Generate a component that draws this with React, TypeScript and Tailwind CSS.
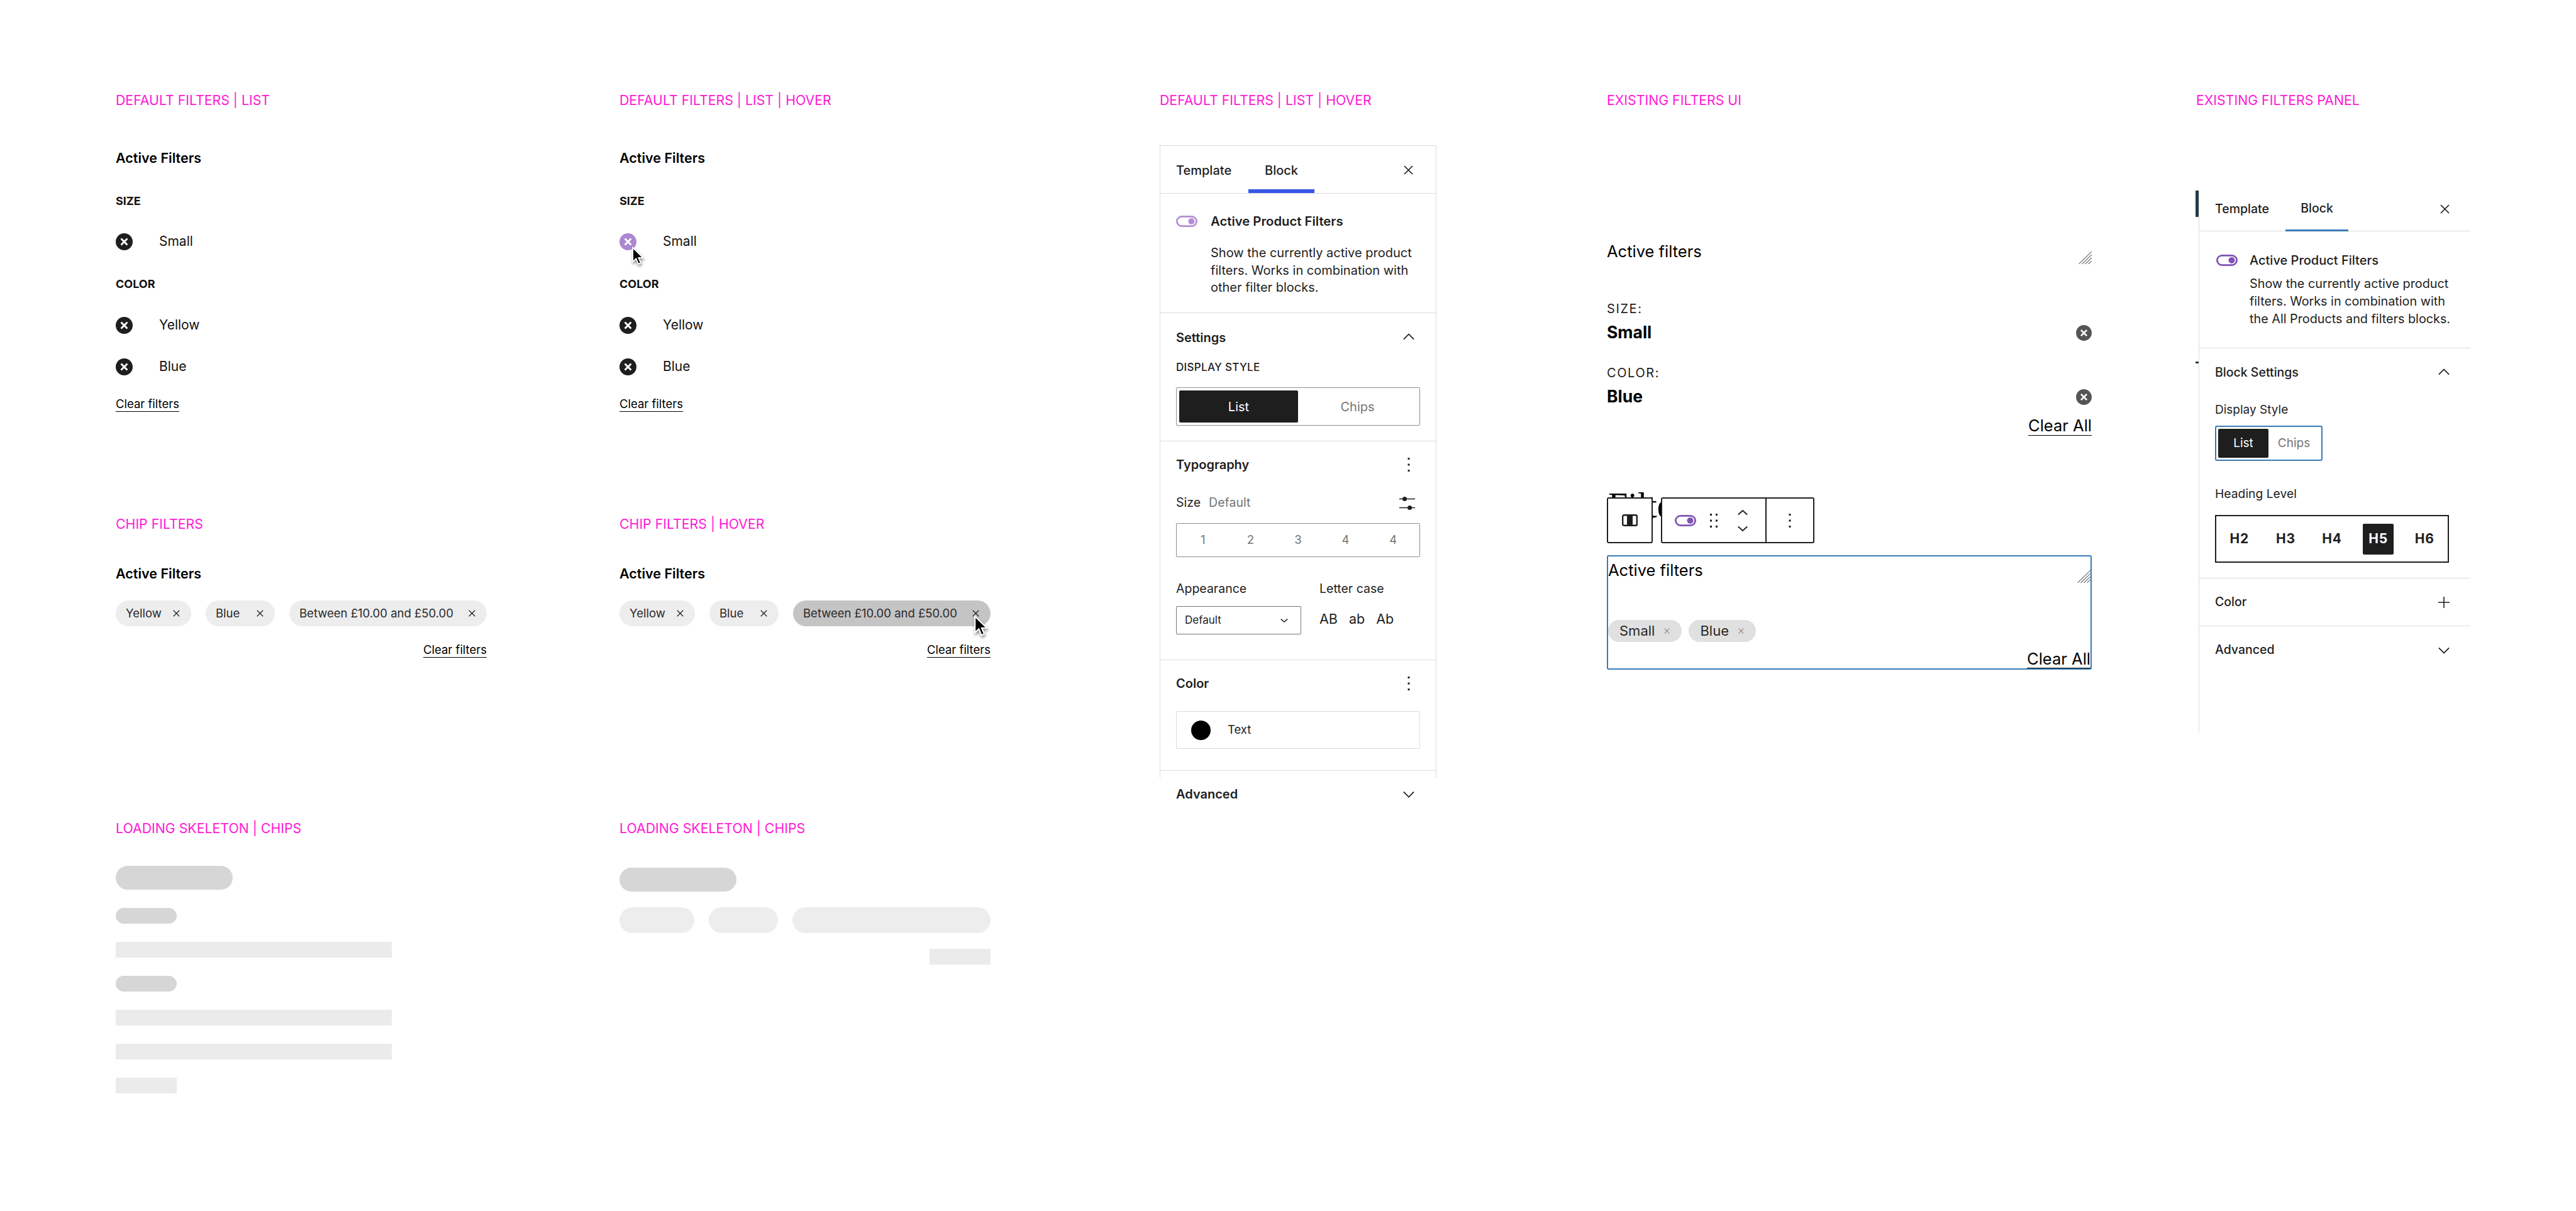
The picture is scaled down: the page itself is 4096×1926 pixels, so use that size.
type Kids = { children?: React.ReactNode };

function Title({ children }: Kids) {
  return <div className="h-[32px] pt-[2px] flex items-center text-[21.3px] text-[#ff19d5] whitespace-nowrap">{children}</div>;
}

function CircleX({ color = "#1e1e1e", size = "w-[27px] h-[27px]" }: { color?: string; size?: string }) {
  return (
    <svg viewBox="0 0 24 24" className={size + " flex-none"}>
      <circle cx="12" cy="12" r="12" fill={color} />
      <path d="M7.6 7.6l8.8 8.8M16.4 7.6l-8.8 8.8" stroke="#fff" strokeWidth="2.6" fill="none" />
    </svg>
  );
}

function Cursor({ className }: { className: string }) {
  return (
    <svg viewBox="-1.5 -1.5 16 24" className={"absolute drop-shadow-[1px_3px_2px_rgba(0,0,0,0.45)] " + className}>
      <path d="M0 0V17.2L4.1 13.4L6.9 20L9.9 18.7L7.1 12.3H12.6Z" fill="#000" stroke="#fff" strokeWidth="1.4" />
    </svg>
  );
}

function CloseIcon({ className = "w-[15px] h-[15px]" }: { className?: string }) {
  return (
    <svg viewBox="0 0 15 15" className={className + " flex-none"}>
      <path d="M1 1l13 13M14 1L1 14" stroke="#1e1e1e" strokeWidth="1.7" fill="none" />
    </svg>
  );
}

function Chevron({ up = false }: { up?: boolean }) {
  return (
    <svg viewBox="0 0 20 12" className="w-[18px] h-[11px] flex-none">
      <path d={up ? "M1 10.5L10 1.5L19 10.5" : "M1 1.5L10 10.5L19 1.5"} stroke="#1e1e1e" strokeWidth="2" fill="none" />
    </svg>
  );
}

function Dots() {
  return (
    <svg viewBox="0 0 4 22" className="w-[4px] h-[22px] flex-none" fill="#1e1e1e">
      <rect x="0.5" y="0" width="3" height="3" />
      <rect x="0.5" y="9.5" width="3" height="3" />
      <rect x="0.5" y="19" width="3" height="3" />
    </svg>
  );
}

function Toggle({ color }: { color: string }) {
  return (
    <svg viewBox="0 0 34 18" className="w-[34px] h-[18px] flex-none">
      <rect x="1.4" y="1.4" width="31.2" height="15.2" rx="7.6" fill="none" stroke={color} strokeWidth="2.8" />
      <circle cx="24.5" cy="9" r="5" fill={color} />
    </svg>
  );
}

function ResizeHandle() {
  return (
    <svg viewBox="0 0 21 20" className="w-[21px] h-[20px] flex-none">
      <path d="M0.5 20L21 0M5.5 20L21 5M10.5 20L21 10M15.5 20L21 15" stroke="#6e6e6e" strokeWidth="1.1" fill="none" />
    </svg>
  );
}

function ListRow({ label, color, children }: { label: string; color?: string; children?: React.ReactNode }) {
  return (
    <div className="relative h-[36px] flex items-center text-[21px] text-[#111]">
      <CircleX color={color} />
      <span className="ml-[42px]">{label}</span>
      {children}
    </div>
  );
}

function ClearFilters({ className = "" }: { className?: string }) {
  return (
    <div className={"w-fit h-[24px] flex items-center border-b border-black text-[18.5px] text-black whitespace-nowrap " + className}>
      Clear filters
    </div>
  );
}

function ListFilters({ title, hover = false }: { title: string; hover?: boolean }) {
  return (
    <section className="flex flex-col">
      <Title>{title}</Title>
      <div className="mt-[60px] h-[32px] flex items-center text-[21.5px] font-semibold text-black">Active Filters</div>
      <div className="mt-[40px] h-[24px] flex items-center text-[18px] font-bold text-[#111]">SIZE</div>
      <div className="mt-[35px]">
        <ListRow label="Small" color={hover ? "#ab87d1" : undefined}>
          {hover && <Cursor className="left-[19px] top-[26px] w-[21px] h-[31px]" />}
        </ListRow>
      </div>
      <div className="mt-[37px] h-[24px] flex items-center text-[18px] font-bold text-[#111]">COLOR</div>
      <div className="mt-[36px]"><ListRow label="Yellow" /></div>
      <div className="mt-[30px]"><ListRow label="Blue" /></div>
      <ClearFilters className="mt-[30px]" />
    </section>
  );
}

function Chip({ label, width, active = false, children }: { label: string; width: string; active?: boolean; children?: React.ReactNode }) {
  return (
    <div className={"relative h-[41px] rounded-full flex items-center justify-between pl-[16px] pr-[18px] text-[18.5px] text-[#2a2a2a] whitespace-nowrap " + width + " " + (active ? "bg-[#c4c4c4]" : "bg-[#ededed]")}>
      {label}
      <CloseIcon className="w-[11px] h-[11px]" />
      {children}
    </div>
  );
}

function ChipFilters({ title, hover = false }: { title: string; hover?: boolean }) {
  return (
    <section className="flex flex-col w-[590px]">
      <Title>{title}</Title>
      <div className="mt-[47px] h-[32px] flex items-center text-[21.5px] font-semibold text-black">Active Filters</div>
      <div className="mt-[27px] flex gap-[23px]">
        <Chip label="Yellow" width="w-[120px]" />
        <Chip label="Blue" width="w-[110px]" />
        <Chip label="Between £10.00 and £50.00" width="w-[314px]" active={hover}>
          {hover && <Cursor className="left-[287px] top-[23px] w-[24px] h-[36px]" />}
        </Chip>
      </div>
      <ClearFilters className="mt-[26px] self-end" />
    </section>
  );
}

function SkeletonList() {
  return (
    <section className="flex flex-col">
      <Title>LOADING SKELETON | CHIPS</Title>
      <div className="mt-[44px] w-[186px] h-[38px] rounded-full bg-[#d6d6d6]" />
      <div className="mt-[29px] flex flex-col gap-[29px]">
        <div className="w-[97px] h-[25px] rounded-full bg-[#d6d6d6]" />
        <div className="w-[439px] h-[25px] bg-[#ebebeb]" />
        <div className="w-[97px] h-[25px] rounded-full bg-[#d6d6d6]" />
        <div className="w-[439px] h-[25px] bg-[#ebebeb]" />
        <div className="w-[439px] h-[25px] bg-[#ebebeb]" />
        <div className="w-[97px] h-[25px] bg-[#ebebeb]" />
      </div>
    </section>
  );
}

function SkeletonChips() {
  return (
    <section className="flex flex-col w-[590px]">
      <Title>LOADING SKELETON | CHIPS</Title>
      <div className="mt-[47px] w-[186px] h-[38px] rounded-full bg-[#d6d6d6]" />
      <div className="mt-[25px] flex gap-[23px]">
        <div className="w-[119px] h-[41px] rounded-full bg-[#ededed]" />
        <div className="w-[110px] h-[41px] rounded-full bg-[#ededed]" />
        <div className="w-[315px] h-[41px] rounded-full bg-[#ededed]" />
      </div>
      <div className="mt-[25px] self-end w-[97px] h-[25px] bg-[#ebebeb]" />
    </section>
  );
}

function TypographyPanel() {
  const sectionClass = "border-b border-[#dcdcdc] px-[25px]";
  const headClass = "h-[28px] flex items-center justify-between text-[20px] font-semibold";
  return (
    <div className="w-[440px] mt-[56px] flex flex-col">
      <div className="border-x border-t border-[#dcdcdc] text-[#1e1e1e]">
        <div className="h-[76px] flex border-b border-[#dcdcdc] text-[20px] font-medium">
          <div className="w-[140px] h-[75px] pl-[25px] pt-[8px] pb-[6px] flex items-center">Template</div>
          <div className="w-[105px] h-[75px] pt-[8px] flex items-center justify-center border-b-[6px] border-[#3858e9]">Block</div>
          <div className="ml-auto mr-[36px] h-[75px] pt-[2px] flex items-center"><CloseIcon /></div>
        </div>
        <div className={sectionClass + " h-[190px] pt-[30px]"}>
          <div className="h-[28px] flex items-center gap-[21px] text-[20.3px] font-semibold">
            <Toggle color="#b48ed4" />
            Active Product Filters
          </div>
          <div className="mt-[23px] ml-[55px] text-[20px] leading-[27.6px] whitespace-nowrap">
            <div>Show the currently active product</div>
            <div>filters. Works in combination with</div>
            <div>other filter blocks.</div>
          </div>
        </div>
        <div className={sectionClass + " pt-[25px] pb-[24px]"}>
          <div className={headClass}>
            Settings
            <div className="mr-[9px] -translate-y-[2px]"><Chevron up /></div>
          </div>
          <div className="mt-[23px] h-[22px] flex items-center text-[17px] font-medium tracking-[0.3px]">DISPLAY STYLE</div>
          <div className="mt-[20px] h-[61px] border border-[#8f8f8f] rounded-[2px] p-[4px] grid grid-cols-2 text-[20px]">
            <div className="bg-[#1e1e1e] text-white rounded-[2px] flex items-center justify-center">List</div>
            <div className="text-[#757575] flex items-center justify-center">Chips</div>
          </div>
        </div>
        <div className={sectionClass + " pt-[23px] pb-[40px]"}>
          <div className={headClass}>
            Typography
            <div className="mr-[16px]"><Dots /></div>
          </div>
          <div className="mt-[34px] h-[26px] flex items-center text-[19.5px]">
            <span>Size</span>
            <span className="ml-[13px] text-[#757575]">Default</span>
            <svg viewBox="0 0 25 21" className="ml-auto mr-[8px] w-[25px] h-[21px]">
              <path d="M0 3.5H25M0 17.5H25" stroke="#1e1e1e" strokeWidth="1.6" />
              <circle cx="8.5" cy="3.5" r="3.5" fill="#1e1e1e" />
              <circle cx="16.5" cy="17.5" r="3.5" fill="#1e1e1e" />
            </svg>
          </div>
          <div className="mt-[19px] h-[54px] border border-[#8f8f8f] rounded-[2px] grid grid-cols-5 text-[18.5px] text-[#757575] px-[4px]">
            {["1", "2", "3", "4", "4"].map((n, i) => (
              <div key={i} className="flex items-center justify-center">{n}</div>
            ))}
          </div>
          <div className="mt-[39px] grid grid-cols-[199px_1fr] gap-x-[29px] text-[19.5px]">
            <div className="h-[24px] flex items-center">Appearance</div>
            <div className="h-[24px] flex items-center">Letter case</div>
            <div className="mt-[15px] h-[45px] border border-[#757575] rounded-[2px] pl-[13px] pr-[20px] flex items-center justify-between text-[17px]">
              Default
              <svg viewBox="0 0 12 6" className="w-[12px] h-[6px]">
                <path d="M0.7 0.7L6 5L11.3 0.7" stroke="#1e1e1e" strokeWidth="1.5" fill="none" />
              </svg>
            </div>
            <div className="mt-[15px] h-[40px] flex items-center gap-[18px] text-[21.5px]">
              <span>AB</span>
              <span>ab</span>
              <span>Ab</span>
            </div>
          </div>
        </div>
        <div className={sectionClass + " pt-[23px] pb-[34px]"}>
          <div className={headClass}>
            Color
            <div className="mr-[16px]"><Dots /></div>
          </div>
          <div className="mt-[30px] h-[60px] border border-[#dcdcdc] rounded-[2px] pl-[23px] flex items-center gap-[27px] text-[18.5px]">
            <div className="w-[31px] h-[31px] rounded-full bg-black" />
            Text
          </div>
        </div>
        <div className="h-[11px]" />
      </div>
      <div className={headClass + " mt-[12px] px-[26px]"}>
        Advanced
        <div className="mr-[9px]"><Chevron /></div>
      </div>
    </div>
  );
}

function ExistingUi() {
  const bodyClass = "h-[40px] flex items-end justify-between text-[25.5px] text-black whitespace-nowrap";
  const clearClass = "w-fit h-[31px] flex items-center self-end border-b border-black text-[25.5px] text-black";
  return (
    <div className="w-[771px] flex flex-col">
      <Title>EXISTING FILTERS UI</Title>
      <div className="mt-[205px] flex flex-col">
        <div className={bodyClass}>
          <span className="self-center">Active filters</span>
          <ResizeHandle />
        </div>
        <div className="mt-[57px] h-[28px] flex items-center text-[20px] tracking-[1.6px]">SIZE:</div>
        <div className="mt-[6px] h-[36px] flex items-center justify-between text-[26.5px] font-bold text-black">
          Small
          <CircleX color="#555" size="w-[25px] h-[25px]" />
        </div>
        <div className="mt-[32px] h-[28px] flex items-center text-[20px] tracking-[1.6px]">COLOR:</div>
        <div className="mt-[6px] h-[36px] flex items-center justify-between text-[26.5px] font-bold text-black">
          Blue
          <CircleX color="#555" size="w-[25px] h-[25px]" />
        </div>
        <div className={clearClass + " mt-[13px]"}>Clear All</div>
      </div>
      <div className="relative mt-[98px] flex gap-[13px] h-[73px]">
        <span className="absolute left-[2px] top-[-15px] font-['Liberation_Serif',serif] text-[56px] leading-none text-black">Filter</span>
        <div className="relative w-[73px] border-2 border-[#1e1e1e] rounded-[3px] bg-white flex items-center justify-center">
          <svg viewBox="0 0 25 19" className="w-[25px] h-[19px]">
            <rect x="1.2" y="1.2" width="22.6" height="16.6" rx="2" fill="none" stroke="#1e1e1e" strokeWidth="2.4" />
            <rect x="8" y="1" width="9" height="17" fill="#1e1e1e" />
          </svg>
        </div>
        <div className="relative w-[244px] border-2 border-[#1e1e1e] rounded-[3px] bg-white flex">
          <div className="w-[166px] border-r-2 border-[#1e1e1e] pl-[20px] flex items-center">
            <Toggle color="#7f54b3" />
            <svg viewBox="0 0 12 22" className="ml-[22px] w-[12px] h-[22px]" fill="#1e1e1e">
              <rect x="0" y="0" width="3" height="3" />
              <rect x="9" y="0" width="3" height="3" />
              <rect x="0" y="9.5" width="3" height="3" />
              <rect x="9" y="9.5" width="3" height="3" />
              <rect x="0" y="19" width="3" height="3" />
              <rect x="9" y="19" width="3" height="3" />
            </svg>
            <svg viewBox="0 0 16 34" className="ml-[32px] w-[16px] h-[34px]">
              <path d="M0.8 7.5L8 1L15.2 7.5M0.8 26.5L8 33L15.2 26.5" stroke="#1e1e1e" strokeWidth="1.9" fill="none" />
            </svg>
          </div>
          <div className="flex-1 flex items-center justify-center"><Dots /></div>
        </div>
      </div>
      <div className="mt-[19px] h-[182px] border-2 border-[#3a7ab3] rounded-[3px] flex flex-col">
        <div className={bodyClass}>
          <span className="self-center translate-y-[2px]">Active filters</span>
          <div className="translate-y-[2px]"><ResizeHandle /></div>
        </div>
        <div className="mt-[61px] flex gap-[11px]">
          {["Small", "Blue"].map((label) => (
            <div key={label} className="h-[35px] rounded-full bg-[#e0e0e0] pl-[18px] pr-[19px] flex items-center gap-[15px] text-[22px] text-[#2a2a2a]">
              {label}
              <svg viewBox="0 0 10 10" className="w-[9px] h-[9px]">
                <path d="M0.7 0.7L9.3 9.3M9.3 0.7L0.7 9.3" stroke="#8a8a8a" strokeWidth="1.3" fill="none" />
              </svg>
            </div>
          ))}
        </div>
        <div className={clearClass + " mt-auto pt-[3px]"}>Clear All</div>
      </div>
    </div>
  );
}

function ExistingPanel() {
  const sectionClass = "border-b border-[#dcdcdc] pl-[25px]";
  const headClass = "flex items-center justify-between text-[19.5px] font-medium";
  return (
    <div className="flex flex-col w-[436px]">
      <Title>EXISTING FILTERS PANEL</Title>
      <div className="relative ml-[4px] mt-[128px] h-[862px] border-l border-[#dcdcdc] text-[#1e1e1e]">
        <div className="absolute left-[-6px] top-0 w-[5px] h-[42px] bg-[#1f4047]" />
        <div className="absolute left-[-6px] top-[272px] w-[5px] h-[3px] bg-[#1f4047]" />
        <div className="h-[65px] flex border-b border-[#dcdcdc] text-[19.5px] font-medium">
          <div className="w-[137px] h-[64px] pl-[25px] pb-[5px] flex items-center">Template</div>
          <div className="w-[100px] h-[65px] pb-[4px] flex items-center justify-center border-b-[3px] border-[#3a7ab3]">Block</div>
          <div className="ml-auto mr-[33px] h-[64px] pb-[6px] flex items-center"><CloseIcon /></div>
        </div>
        <div className={sectionClass + " h-[186px] pt-[32px]"}>
          <div className="h-[28px] flex items-center gap-[19px] text-[20px] font-medium">
            <div className="ml-[2px]"><Toggle color="#7f54b3" /></div>
            Active Product Filters
          </div>
          <div className="mt-[9px] ml-[55px] text-[19.8px] leading-[28px] whitespace-nowrap">
            <div>Show the currently active product</div>
            <div>filters. Works in combination with</div>
            <div>the All Products and filters blocks.</div>
          </div>
        </div>
        <div className={sectionClass + " pt-[25px] pb-[24px]"}>
          <div className={headClass + " h-[28px]"}>
            Block Settings
            <div className="mr-[33px] -translate-y-[2px]"><Chevron up /></div>
          </div>
          <div className="mt-[33px] h-[24px] flex items-center text-[19px]">Display Style</div>
          <div className="mt-[13px] w-[171px] h-[56px] border-2 border-[#3a7ab3] rounded-[3px] p-[3px] grid grid-cols-[80px_1fr] text-[19px]">
            <div className="bg-[#1e1e1e] text-white rounded-[2px] flex items-center justify-center">List</div>
            <div className="text-[#757575] flex items-center justify-center">Chips</div>
          </div>
          <div className="mt-[40px] h-[24px] flex items-center text-[19.3px]">Heading Level</div>
          <div className="mt-[22px] w-[372px] h-[76px] border-2 border-[#1e1e1e] grid grid-cols-5 text-[21px] font-bold tracking-[0.8px]">
            {["H2", "H3", "H4", "H5", "H6"].map((h) => (
              <div key={h} className="flex items-center justify-center">
                <span className={"w-[49px] h-[49px] rounded-[2px] flex items-center justify-center " + (h === "H5" ? "bg-[#1e1e1e] text-white" : "")}>{h}</span>
              </div>
            ))}
          </div>
        </div>
        <div className={sectionClass + " " + headClass + " h-[76px]"}>
          Color
          <svg viewBox="0 0 18 18" className="mr-[33px] w-[18px] h-[18px]">
            <path d="M9 0V18M0 9H18" stroke="#1e1e1e" strokeWidth="1.6" />
          </svg>
        </div>
        <div className={"pl-[25px] " + headClass + " h-[76px]"}>
          Advanced
          <div className="mr-[33px]"><Chevron /></div>
        </div>
      </div>
    </div>
  );
}

export default function App() {
  return (
    <div className="w-[4096px] h-[1926px] overflow-hidden bg-white flex pl-[184px] pt-[143px] font-[Inter,sans-serif] text-[#1e1e1e]">
      <div className="flex-none w-[1660px] grid grid-cols-[801px_859px] grid-rows-[674px_484px_auto]">
        <ListFilters title="DEFAULT FILTERS | LIST" />
        <ListFilters title="DEFAULT FILTERS | LIST | HOVER" hover />
        <ChipFilters title="CHIP FILTERS" />
        <ChipFilters title="CHIP FILTERS | HOVER" hover />
        <SkeletonList />
        <SkeletonChips />
      </div>
      <div className="flex-none w-[711px] flex flex-col">
        <Title>DEFAULT FILTERS | LIST | HOVER</Title>
        <TypographyPanel />
      </div>
      <div className="flex-none w-[937px]">
        <ExistingUi />
      </div>
      <ExistingPanel />
    </div>
  );
}
